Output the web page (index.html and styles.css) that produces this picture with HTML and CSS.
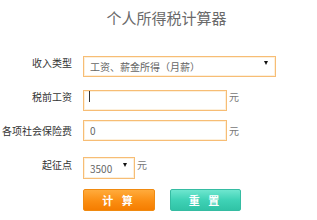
FILE: index.html
```html
<!DOCTYPE html>
<html lang="zh-CN">
<head>
    <meta charset="UTF-8">
    <meta name="viewport" content="width=device-width, initial-scale=1.0">
    <title>个人所得税计算器</title>
    <link rel="stylesheet" href="styles.css">
</head>
<body>

    <div class="calc">
        <h1 class="calc-title">个人所得税计算器</h1>

        <div class="calc-form">
            <div class="form-row">
                <label class="form-label">收入类型</label>
                <div class="select-wrap select-wide">
                    <select class="form-select">
                        <option>工资、薪金所得（月薪）</option>
                    </select>
                    <span class="select-arrow"></span>
                </div>
            </div>

            <div class="form-row">
                <label class="form-label">税前工资</label>
                <div class="input-wrap">
                    <input type="text" class="form-input">
                    <span class="fake-caret"></span>
                </div>
                <span class="unit">元</span>
            </div>

            <div class="form-row">
                <label class="form-label">各项社会保险费</label>
                <input type="text" class="form-input" value="0">
                <span class="unit">元</span>
            </div>

            <div class="form-row">
                <label class="form-label">起征点</label>
                <div class="select-wrap select-small">
                    <select class="form-select">
                        <option>3500</option>
                        <option>5000</option>
                    </select>
                    <span class="select-arrow"></span>
                </div>
                <span class="unit">元</span>
            </div>

            <div class="form-row form-buttons">
                <button class="btn btn-calc">计 算</button>
                <button class="btn btn-reset">重 置</button>
            </div>
        </div>
    </div>

</body>
</html>
```

FILE: styles.css
```css
body {
    margin: 0;
    background-color: #fff;
    font-family: "Noto Sans CJK SC", "DejaVu Sans", sans-serif;
}
.calc {
    width: 317px;
    height: 220px;
    overflow: hidden;
}
.calc-title {
    margin: 7px 0 0;
    padding-left: 16px;
    text-align: center;
    font-size: 15px;
    line-height: 22px;
    font-weight: normal;
    color: #6a6a6a;
}
.calc-form {
    display: flex;
    flex-direction: column;
    gap: 13px;
    margin-top: 23px;
}
.form-row {
    display: flex;
    align-items: center;
    height: 21px;
}
.form-label {
    width: 72px;
    margin-right: 11px;
    text-align: right;
    font-size: 10px;
    color: #333;
    white-space: nowrap;
}
.select-wrap,
.input-wrap {
    position: relative;
    height: 21px;
}
.select-wide {
    width: 193px;
}
.select-small {
    width: 52px;
    height: 22px;
}
.form-select,
.form-input {
    box-sizing: border-box;
    height: 21px;
    margin: 0;
    padding: 0 0 0 6px;
    border: 1px solid #f7bd75;
    border-radius: 0;
    background-color: #fff;
    box-shadow: inset 0 0 0 1px #fdf0dc;
    font-family: "Noto Sans CJK SC", "DejaVu Sans", sans-serif;
    font-size: 10px;
    color: #666;
    outline: none;
}
.form-select {
    width: 100%;
    height: 100%;
    appearance: none;
    -webkit-appearance: none;
}
.form-input {
    width: 144px;
}
.select-arrow {
    position: absolute;
    right: 8px;
    top: 9px;
    width: 0;
    height: 0;
    border-left: 2.5px solid transparent;
    border-right: 2.5px solid transparent;
    border-top: 4px solid #111;
}
.fake-caret {
    position: absolute;
    left: 6px;
    top: 5px;
    width: 1px;
    height: 11px;
    background-color: #333;
}
.unit {
    margin-left: 2px;
    font-size: 10px;
    color: #777;
}
.form-buttons {
    height: 22px;
    margin-top: 1px;
    padding-left: 83px;
    gap: 15px;
}
.btn {
    box-sizing: border-box;
    width: 72px;
    height: 22px;
    padding: 0;
    border-radius: 2px;
    font-family: "Noto Sans CJK SC", "DejaVu Sans", sans-serif;
    font-size: 11px;
    font-weight: bold;
    color: #fff;
    letter-spacing: 3px;
    cursor: pointer;
}
.btn-calc {
    border: 1px solid #f08a10;
    background: linear-gradient(#ffab3c, #fb8e12 55%, #f57d00);
}
.btn-reset {
    width: 71px;
    border: 1px solid #35bca2;
    background: linear-gradient(#6ee6cf, #3fd2b6 50%, #30c3a6);
}
```
